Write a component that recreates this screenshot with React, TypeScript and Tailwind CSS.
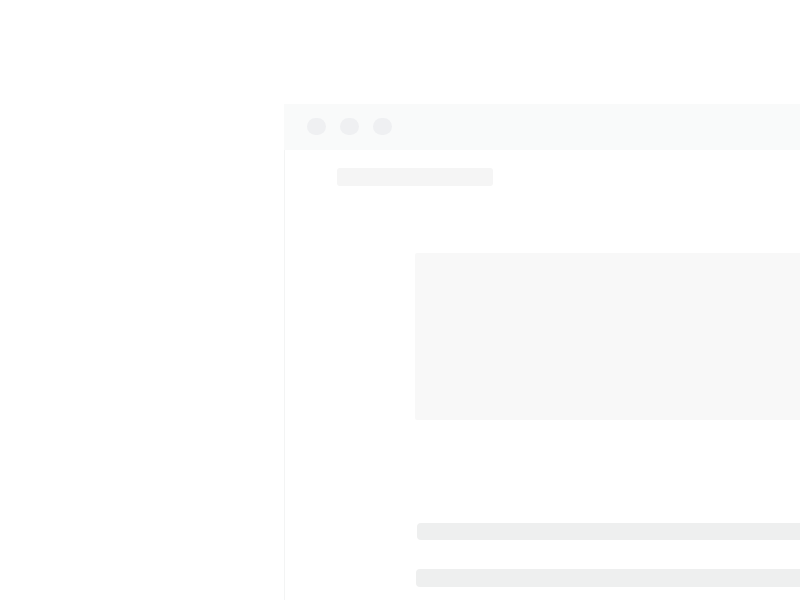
export default function App() {
  return (
    <div className="w-[800px] h-[600px] bg-white overflow-hidden pl-[284px] pt-[104px]">
      <div className="w-[560px] h-[600px] flex flex-col">
        <div className="h-[46px] bg-[#f9fafa] flex items-center pl-[23px] pb-[1px] gap-[14px] shrink-0">
          <div className="w-[19px] h-[17px] rounded-full bg-[#eff0f2]" />
          <div className="w-[19px] h-[17px] rounded-full bg-[#eff0f2]" />
          <div className="w-[19px] h-[17px] rounded-full bg-[#eff0f2]" />
        </div>
        <div className="flex-1 border-l border-[#f3f4f4] flex flex-col pt-[18px]">
          <div className="ml-[52px] w-[156px] h-[18px] rounded-[3px] bg-[#f5f5f5]" />
          <div className="ml-[130px] mt-[67px] h-[167px] bg-[#f8f8f8] rounded-l-[2px]" />
          <div className="ml-[132px] mt-[103px] h-[17px] bg-[#eeefef] rounded-l-[4px]" />
          <div className="ml-[131px] mt-[29px] h-[18px] bg-[#eeefef] rounded-l-[4px]" />
        </div>
      </div>
    </div>
  );
}
